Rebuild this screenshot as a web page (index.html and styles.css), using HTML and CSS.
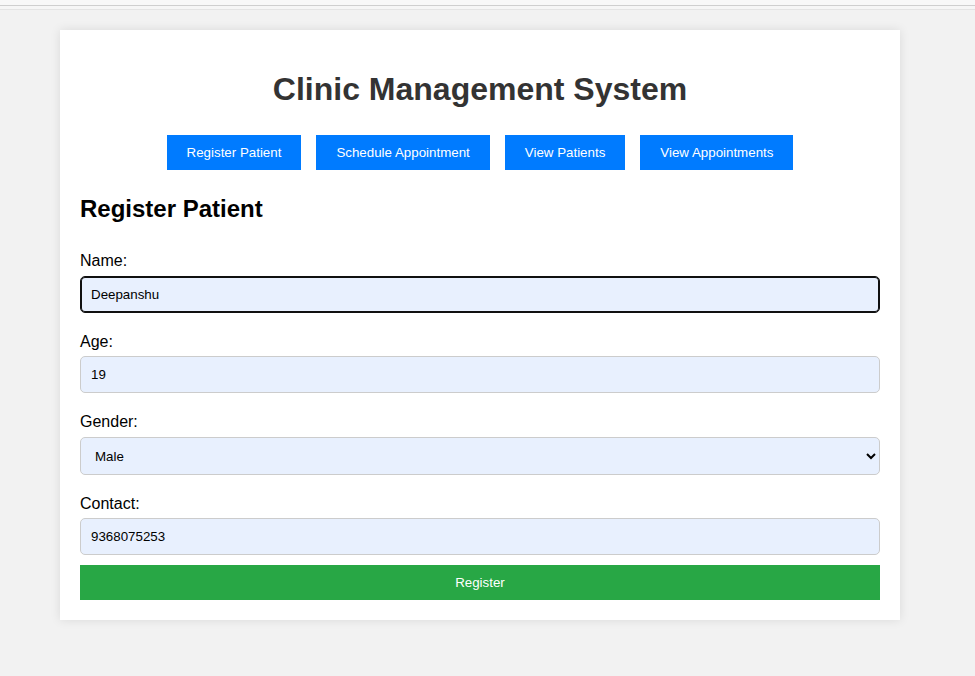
FILE: index.html
```html
<!DOCTYPE html>
<html lang="en">
<head>
<meta charset="utf-8">
<title>Clinic Management System</title>
<link rel="stylesheet" href="styles.css">
</head>
<body>
<div class="topstrip"></div>
<div class="topstrip-inner"></div>
<div class="container">
  <h1>Clinic Management System</h1>
  <nav class="nav">
    <button class="nav-btn">Register Patient</button>
    <button class="nav-btn">Schedule Appointment</button>
    <button class="nav-btn">View Patients</button>
    <button class="nav-btn">View Appointments</button>
  </nav>
  <section class="section">
    <h2>Register Patient</h2>
    <form class="form">
      <label class="label" for="name">Name:</label>
      <input class="field focused" id="name" type="text" value="Deepanshu">
      <label class="label" for="age">Age:</label>
      <input class="field" id="age" type="text" value="19">
      <label class="label" for="gender">Gender:</label>
      <select class="field select" id="gender">
        <option>Male</option>
        <option>Female</option>
        <option>Other</option>
      </select>
      <label class="label" for="contact">Contact:</label>
      <input class="field" id="contact" type="text" value="9368075253">
      <button class="submit" type="button">Register</button>
    </form>
  </section>
</div>
</body>
</html>
```
FILE: styles.css
```css
html, body {
  margin: 0;
  padding: 0;
}
body {
  background: #f2f2f2;
  font-family: "Liberation Sans", Arial, sans-serif;
  color: #000;
  min-height: 676px;
  overflow: hidden;
}
.topstrip {
  height: 5px;
  background: #f8f8f8;
  border-bottom: 1px solid #cfcfcf;
}
.topstrip-inner {
  height: 3px;
  background: #f6f6f6;
  border-bottom: 1px solid #e4e4e4;
}
.container {
  width: 800px;
  margin: 20px 0 0 60px;
  padding: 20px;
  background: #fff;
  box-shadow: 0 0 10px rgba(0, 0, 0, 0.1);
}
h1 {
  font-size: 32px;
  text-align: center;
  color: #333;
  margin: 21.44px 0;
  line-height: 37px;
}
.nav {
  display: flex;
  justify-content: center;
  gap: 5px;
}
.nav-btn {
  font-family: "Liberation Sans", Arial, sans-serif;
  font-size: 13.333px;
  line-height: 15px;
  background: #007bff;
  color: #fff;
  border: none;
  padding: 10px 20px;
  margin: 5px;
  cursor: pointer;
}
h2 {
  font-size: 24px;
  margin: 19.92px 0;
  line-height: 27.6px;
}
.form {
  display: flex;
  flex-direction: column;
}
.label {
  display: block;
  font-size: 16px;
  line-height: 18.4px;
  margin: 10px 0 5px;
}
.field {
  box-sizing: border-box;
  width: 100%;
  height: 37px;
  padding: 10px;
  margin-bottom: 10px;
  border: 1px solid #ccc;
  border-radius: 5px;
  background: #e8f0fe;
  font-family: "Liberation Sans", Arial, sans-serif;
  font-size: 13.333px;
  color: #000;
}
.focused {
  border-color: #101010;
  box-shadow: inset 0 0 0 1px #101010;
  outline: none;
}
.select {
  height: 38.5px;
  padding: 10px 6px 10px 10px;
}
.submit {
  width: 100%;
  height: 35px;
  background: #28a745;
  color: #fff;
  border: none;
  font-family: "Liberation Sans", Arial, sans-serif;
  font-size: 13.333px;
  padding: 10px;
  cursor: pointer;
}
```
